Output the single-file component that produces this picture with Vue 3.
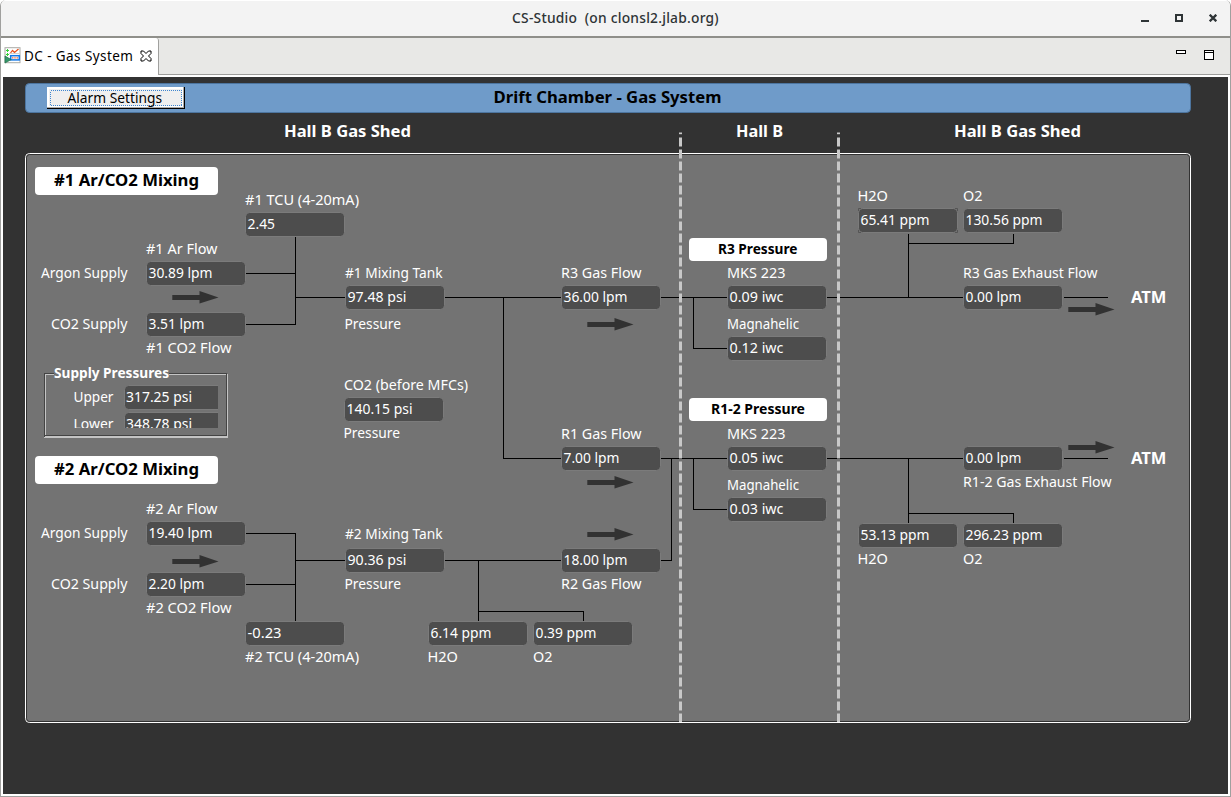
<script setup>
const heading = (x, y, w, t, s = 15.6) => ({ x, y, w, t, s })

const headings = [
  heading(284, 137, 127, 'Hall B Gas Shed'),
  heading(736, 137, 47, 'Hall B'),
  heading(954, 137, 127, 'Hall B Gas Shed'),
  heading(1131, 303, 35.5, 'ATM'),
  heading(1131, 464, 35.5, 'ATM'),
]

const plates = [
  { x: 35, y: 167, w: 183, h: 28, tx: 54, ty: 186, tw: 145, s: 15.6, t: '#1 Ar/CO2 Mixing' },
  { x: 35, y: 456, w: 183, h: 28, tx: 54, ty: 475, tw: 145, s: 15.6, t: '#2 Ar/CO2 Mixing' },
  { x: 689, y: 238, w: 138, h: 23, tx: 718, ty: 254, tw: 79.5, s: 13.4, t: 'R3 Pressure' },
  { x: 689, y: 398, w: 138, h: 23, tx: 711, ty: 414, tw: 94, s: 13.4, t: 'R1-2 Pressure' },
]

const labels = [
  [245, 205, 114, '#1 TCU (4-20mA)'],
  [146, 254, 71.5, '#1 Ar Flow'],
  [41, 278, 86.5, 'Argon Supply'],
  [51, 329, 76.5, 'CO2 Supply'],
  [146, 353, 85.5, '#1 CO2 Flow'],
  [345, 278, 97.5, '#1 Mixing Tank'],
  [344.5, 329, 56.5, 'Pressure'],
  [344, 390, 124, 'CO2 (before MFCs)'],
  [343.5, 438, 56.5, 'Pressure'],
  [561, 278, 80.5, 'R3 Gas Flow'],
  [561, 439, 80.5, 'R1 Gas Flow'],
  [561, 589, 80.5, 'R2 Gas Flow'],
  [345, 539, 97.5, '#2 Mixing Tank'],
  [344.5, 589, 56.5, 'Pressure'],
  [427.5, 662, 30.5, 'H2O'],
  [533, 662, 19.5, 'O2'],
  [146, 514, 71.5, '#2 Ar Flow'],
  [41, 538, 86.5, 'Argon Supply'],
  [51, 589, 76.5, 'CO2 Supply'],
  [146, 613, 85.5, '#2 CO2 Flow'],
  [245, 662, 114, '#2 TCU (4-20mA)'],
  [727, 278, 58.5, 'MKS 223'],
  [727, 329, 72, 'Magnahelic'],
  [727, 439, 58.5, 'MKS 223'],
  [727, 490, 72, 'Magnahelic'],
  [857.5, 201, 30.5, 'H2O'],
  [963, 201, 19.5, 'O2'],
  [963, 278, 134.5, 'R3 Gas Exhaust Flow'],
  [963, 487, 148.5, 'R1-2 Gas Exhaust Flow'],
  [857.5, 564, 30.5, 'H2O'],
  [963, 564, 19.5, 'O2'],
]

const readings = [
  [246, 213, 27.5, '2.45'],
  [147, 262, 64, '30.89 lpm'],
  [147, 313, 56, '3.51 lpm'],
  [346, 286, 59, '97.48 psi'],
  [345, 398, 66, '140.15 psi'],
  [562, 286, 64, '36.00 lpm'],
  [562, 447, 56, '7.00 lpm'],
  [562, 549, 64, '18.00 lpm'],
  [346, 549, 59, '90.36 psi'],
  [147, 522, 64, '19.40 lpm'],
  [147, 573, 56, '2.20 lpm'],
  [246, 622, 34, '-0.23'],
  [429, 622, 61, '6.14 ppm'],
  [534, 622, 61, '0.39 ppm'],
  [728, 286, 54, '0.09 iwc'],
  [728, 337, 54, '0.12 iwc'],
  [728, 447, 54, '0.05 iwc'],
  [728, 498, 54, '0.03 iwc'],
  [859, 209, 69, '65.41 ppm'],
  [964, 209, 77, '130.56 ppm'],
  [964, 286, 56, '0.00 lpm'],
  [964, 447, 56, '0.00 lpm'],
  [859, 524, 69, '53.13 ppm'],
  [964, 524, 77, '296.23 ppm'],
]

const pipes = [
  'M295.5 237V324.5H246', 'M246 273.5H295', 'M295 297.5H346', 'M445 297.5H562',
  'M503.5 297V458.5H562', 'M661 297.5H728', 'M693.5 297V348.5H728', 'M827 297.5H964',
  'M908.5 297V234', 'M908 243.5H1013.5V234', 'M1064 297.5H1108',
  'M661 458.5H728', 'M661 560.5H671.5V458', 'M693.5 458V509.5H728', 'M827 458.5H964',
  'M908.5 458V523', 'M908 513.5H1013.5V523', 'M1064 458.5H1108',
  'M246 533.5H295.5V621', 'M246 584.5H295', 'M295 560.5H346', 'M445 560.5H562',
  'M478.5 560V621', 'M478 611.5H583.5V621',
].join('')

const arrows = [[172, 297], [172, 561], [587, 324], [587, 482], [587, 534], [1068, 309], [1068, 447]]
const dividers = [680.5, 838.5]
</script>

<template>
  <div class="window">
    <header class="titlebar">
      <h1 class="title">CS-Studio&nbsp; (on clonsl2.jlab.org)</h1>
      <svg class="controls" width="76" height="8" viewBox="0 0 76 8">
        <path d="M0 7H8" stroke-width="2" />
        <path d="M35 1H41V7H35Z" stroke-width="2" />
        <path d="M68.7 .7L75.3 7.3M75.3 .7L68.7 7.3" stroke-width="2.3" />
      </svg>
    </header>
    <nav class="tabs">
      <div class="tab">
        <svg width="17" height="17" viewBox="0 0 17 17">
          <rect x="1" y=".7" width="15" height="15" fill="#fff" stroke="#a9aaa6" />
          <path d="M6.5 6L8.5 3.5L10.5 5.5L14.5 2" fill="none" stroke="#e8501c" stroke-width="1.2" />
          <path d="M3.5 2V5M2 3.5H5M3.5 6V9M2 7.5H5" stroke="#36d236" />
          <path d="M5 6.5H15" stroke="#bbb" stroke-width=".7" />
          <rect x="6.7" y="8.7" width="8.6" height="4.2" fill="#fff" stroke="#1479e8" stroke-width="1.5" />
          <path d="M8.2 10.8H14" stroke="#e8501c" stroke-width="1.2" stroke-dasharray="1.2 1" />
          <path d="M1 9L7.2 12.6L1 16Z" fill="#35966a" stroke="#1f7048" stroke-width=".7" />
        </svg>
        <span class="tab-name">DC - Gas System</span>
        <svg class="tab-close" width="12" height="12" viewBox="0 0 12 12">
          <path d="M1 1H3.5L6 3.5L8.5 1H11V3.5L8.5 6L11 8.5V11H8.5L6 8.5L3.5 11H1V8.5L3.5 6L1 3.5Z" />
        </svg>
      </div>
      <svg class="pane-controls" width="38" height="10" viewBox="0 0 38 10" shape-rendering="crispEdges">
        <path d="M.5 .5H9.5V3.5H.5ZM28.5 .5H37.5V9.5H28.5ZM28.5 2.5H37.5" fill="#fff" stroke="#000" />
      </svg>
    </nav>
    <main class="display">
      <svg class="synoptic" width="1225" height="717" viewBox="3 77 1225 717">
        <defs>
          <clipPath id="group-clip"><rect x="46" y="382" width="172" height="46" /></clipPath>
        </defs>
        <rect class="banner" x="25.5" y="83.5" width="1165" height="29" rx="4" />
        <text class="bold dark" x="493.5" y="103" font-size="15.6" textLength="228" lengthAdjust="spacingAndGlyphs">Drift Chamber - Gas System</text>

        <g class="button">
          <rect x="47" y="87" width="138" height="22" fill="#000" />
          <rect x="47" y="87" width="137" height="21" fill="#aaa" />
          <rect x="47" y="87" width="136" height="20" fill="#fff" />
          <rect x="49" y="89" width="133" height="17" fill="#efefef" />
          <rect x="50.5" y="90.5" width="131" height="15" fill="none" stroke="#3f86d0" stroke-dasharray="1 1" shape-rendering="crispEdges" />
          <text class="dark" x="67.5" y="103" textLength="94.5" lengthAdjust="spacingAndGlyphs">Alarm Settings</text>
        </g>

        <rect class="panel-edge" x="25.5" y="153.5" width="1165" height="569" rx="4" />
        <rect class="panel" x="26.5" y="154.5" width="1163" height="567" rx="3" />

        <path class="pipe" :d="pipes" />
        <g v-for="x in dividers" :key="x" class="divider">
          <path :d="`M${x} 132.5V134.2`" />
          <path :d="`M${x} 137.4V722`" stroke-dasharray="9 3" />
        </g>

        <g v-for="[x, y] in arrows" :key="`${x}-${y}`" class="arrow">
          <path :d="`M${x + .3} ${y - 2}h27.2v-4l19 6.4l-19 6.2v-3.6h-27.2z`" />
        </g>

        <text v-for="h in headings" :key="`${h.x}-${h.y}`" class="bold" :x="h.x" :y="h.y" :font-size="h.s" :textLength="h.w" lengthAdjust="spacingAndGlyphs">{{ h.t }}</text>

        <g v-for="p in plates" :key="p.t">
          <rect :x="p.x" :y="p.y" :width="p.w" :height="p.h" rx="4" fill="#fff" />
          <text class="bold dark" :x="p.tx" :y="p.ty" :font-size="p.s" :textLength="p.tw" lengthAdjust="spacingAndGlyphs">{{ p.t }}</text>
        </g>

        <text v-for="[x, y, w, t] in labels" :key="`${x}-${y}`" :x="x" :y="y" :textLength="w" lengthAdjust="spacingAndGlyphs">{{ t }}</text>

        <g v-for="[x, y, w, t] in readings" :key="`${x}-${y}`">
          <rect class="reading" :x="x - .5" :y="y - .5" width="99" height="24" rx="4" />
          <text :x="x + 1.5" :y="y + 16" :textLength="w" lengthAdjust="spacingAndGlyphs">{{ t }}</text>
        </g>
        <path class="corners" d="M858.5 211V208.5H861M955 208.5H957.5V211M858.5 230V232.5H861M955 232.5H957.5V230" />

        <g shape-rendering="crispEdges" fill="none">
          <path d="M54 374.5H45.5V436.5H227.5V374.5H169" stroke="#c4c4c4" />
          <path d="M54 373.5H44.5V437.5M45 435.5H226.5V373.5H169" stroke="#444" />
          <path d="M44 437.5H228" stroke="#c4c4c4" />
        </g>
        <text class="bold" x="54" y="378" font-size="13.4" textLength="115" lengthAdjust="spacingAndGlyphs">Supply Pressures</text>
        <g clip-path="url(#group-clip)">
          <rect class="reading" x="124.5" y="385.5" width="99" height="24" rx="4" />
          <rect class="reading" x="124.5" y="412.5" width="99" height="24" rx="4" />
          <text x="73.5" y="402" textLength="40" lengthAdjust="spacingAndGlyphs">Upper</text>
          <text x="73.5" y="429" textLength="40" lengthAdjust="spacingAndGlyphs">Lower</text>
          <text x="126" y="402" textLength="66" lengthAdjust="spacingAndGlyphs">317.25 psi</text>
          <text x="126" y="429" textLength="66" lengthAdjust="spacingAndGlyphs">348.78 psi</text>
        </g>
      </svg>
    </main>
  </div>
</template>

<style>
body { margin: 0; background: #fff; }
</style>

<style scoped>
.window {
  box-sizing: border-box;
  width: 1231px;
  height: 797px;
  display: flex;
  flex-direction: column;
  overflow: hidden;
  background: #fff;
  border: solid #a0a09e;
  border-width: 0 1px 1px;
  border-radius: 6px 6px 0 0;
  font-family: "Noto Sans", "Open Sans", sans-serif;
}
.titlebar {
  box-sizing: border-box;
  height: 38px;
  flex: none;
  display: grid;
  grid-template-columns: 1fr auto 1fr;
  align-items: center;
  background: #f3f3f3;
  border-top: 1px solid #fff;
  border-bottom: 2px solid #8f8f8a;
}
.title {
  grid-column: 2;
  margin: 0 0 2px;
  font-size: 13.8px;
  line-height: 20px;
  font-weight: 500;
  letter-spacing: 0.23px;
  color: #2e3436;
}
.controls {
  justify-self: end;
  margin: 0 13px 1px 0;
  fill: none;
  stroke: #2e3436;
}
.tabs {
  box-sizing: border-box;
  height: 37px;
  flex: none;
  display: flex;
  justify-content: space-between;
  background: #e8e8e6;
  border-bottom: 1px solid #9d9d9b;
}
.tab {
  box-sizing: border-box;
  width: 158px;
  height: 37px;
  display: flex;
  align-items: center;
  padding: 0 0 2px 3px;
  background: #fff;
  border-right: 1px solid #a0a09e;
  border-radius: 0 3px 0 0;
}
.tab-name {
  width: 110px;
  margin-left: 3px;
  font-size: 13.5px;
  line-height: 20px;
  letter-spacing: 0.42px;
  white-space: nowrap;
  color: #000;
}
.tab-close {
  margin-left: 6px;
  fill: none;
  stroke: #000;
}
.pane-controls {
  margin: 12px 16px 0 0;
}
.display {
  height: 717px;
  margin: 2px 2px;
  flex: none;
  background: #323232;
}
.synoptic {
  display: block;
}
.synoptic text {
  fill: #fff;
  font-size: 13.5px;
}
.synoptic text.bold {
  font-weight: 700;
  font-size: inherit;
}
.synoptic text.bold[font-size="15.6"] { font-size: 15.6px; }
.synoptic text.bold[font-size="13.4"] { font-size: 13.4px; }
.synoptic text.dark { fill: #000; }
.banner { fill: #6f9bc9; stroke: #4d759f; }
.panel-edge { fill: #737373; stroke: #fff; }
.panel { fill: #737373; stroke: #323232; }
.pipe { fill: none; stroke: #000; shape-rendering: crispEdges; }
.divider { stroke: #c8c8c8; stroke-width: 3; }
.arrow { fill: #323232; }
.reading { fill: #4d4d4d; stroke: #7b7b7b; }
.corners { fill: none; stroke: #555; }
</style>
